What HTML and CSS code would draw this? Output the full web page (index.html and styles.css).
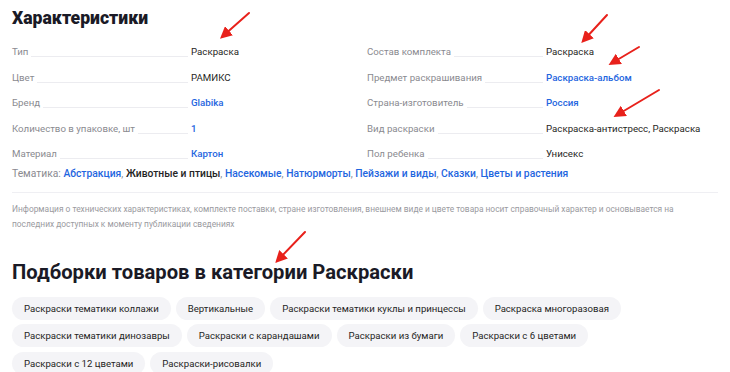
FILE: index.html
```html
<!DOCTYPE html>
<html lang="ru">
<head>
    <meta charset="UTF-8">
    <meta name="viewport" content="width=device-width, initial-scale=1.0">
    <title>Характеристики</title>
    <link rel="stylesheet" href="styles.css">
</head>
<body>
    <div class="page">
        <h2 class="title">Характеристики</h2>

        <!-- Таблица характеристик в две колонки -->
        <div class="params">
            <div class="params-col">
                <div class="param"><span class="param-name">Тип</span><span class="param-value">Раскраска</span></div>
                <div class="param"><span class="param-name">Цвет</span><span class="param-value">РАМИКС</span></div>
                <div class="param"><span class="param-name">Бренд</span><a class="param-value link" href="#">Glabika</a></div>
                <div class="param"><span class="param-name">Количество в упаковке, шт</span><a class="param-value link" href="#">1</a></div>
                <div class="param"><span class="param-name">Материал</span><a class="param-value link" href="#">Картон</a></div>
            </div>
            <div class="params-col">
                <div class="param"><span class="param-name">Состав комплекта</span><span class="param-value">Раскраска</span></div>
                <div class="param"><span class="param-name">Предмет раскрашивания</span><a class="param-value link" href="#">Раскраска-альбом</a></div>
                <div class="param"><span class="param-name">Страна-изготовитель</span><a class="param-value link" href="#">Россия</a></div>
                <div class="param"><span class="param-name">Вид раскраски</span><span class="param-value">Раскраска-антистресс, Раскраска</span></div>
                <div class="param"><span class="param-name">Пол ребенка</span><span class="param-value">Унисекс</span></div>
            </div>
        </div>

        <p class="theme">
            Тематика:
            <a class="link" href="#">Абстракция</a>, <span class="dark">Животные и птицы</span>,
            <a class="link" href="#">Насекомые</a>, <a class="link" href="#">Натюрморты</a>,
            <a class="link" href="#">Пейзажи и виды</a>, <a class="link" href="#">Сказки</a>,
            <a class="link" href="#">Цветы и растения</a>
        </p>

        <p class="note">
            Информация о технических характеристиках, комплекте поставки, стране изготовления, внешнем виде и цвете товара носит справочный характер и основывается на последних доступных к моменту публикации сведениях
        </p>

        <h2 class="title title-second">Подборки товаров в категории Раскраски</h2>

        <div class="chips">
            <a class="chip" href="#">Раскраски тематики коллажи</a>
            <a class="chip" href="#">Вертикальные</a>
            <a class="chip" href="#">Раскраски тематики куклы и принцессы</a>
            <a class="chip" href="#">Раскраска многоразовая</a>
            <a class="chip" href="#">Раскраски тематики динозавры</a>
            <a class="chip" href="#">Раскраски с карандашами</a>
            <a class="chip" href="#">Раскраски из бумаги</a>
            <a class="chip" href="#">Раскраски с 6 цветами</a>
            <a class="chip" href="#">Раскраски с 12 цветами</a>
            <a class="chip" href="#">Раскраски-рисовалки</a>
        </div>

        <!-- Красные стрелки-пометки поверх страницы -->
        <svg class="marks" width="730" height="372" viewBox="0 0 730 372">
            <defs>
                <marker id="head" markerWidth="6" markerHeight="6" refX="4" refY="3" orient="auto" markerUnits="strokeWidth">
                    <path d="M0,0 L6,3 L0,6 Z" fill="#e8211b"/>
                </marker>
            </defs>
            <g stroke="#e8211b" stroke-width="2" stroke-linecap="round" marker-end="url(#head)">
                <line x1="249" y1="13" x2="223" y2="36"/>
                <line x1="607" y1="15" x2="584" y2="40"/>
                <line x1="639" y1="47" x2="612" y2="63"/>
                <line x1="659" y1="90" x2="617" y2="115"/>
                <line x1="305" y1="232" x2="278" y2="260"/>
            </g>
        </svg>
    </div>
</body>
</html>
```

FILE: styles.css
```css
body {
    margin: 0;
    padding: 0;
    background: #ffffff;
    font-family: Roboto, Arial, sans-serif;
    color: #242424;
}
.page {
    position: relative;
    width: 730px;
    height: 372px;
    overflow: hidden;
    padding: 0 12px;
    box-sizing: border-box;
}
.title {
    margin: 0;
    padding-top: 6px;
    font-size: 17.6px;
    line-height: 24px;
    font-weight: 900;
    color: #1a1a26;
}
.title-second {
    padding-top: 28px;
    font-size: 20.2px;
    font-weight: 700;
}
.params {
    display: grid;
    grid-template-columns: 347px 351px;
    column-gap: 8px;
    margin-top: 16px;
}
.param {
    display: flex;
    align-items: baseline;
    height: 25.5px;
    font-size: 9.7px;
}
.param-name {
    width: 176px;
    flex-shrink: 0;
    display: flex;
    color: #8a8a90;
    font-size: 9.7px;
    margin-right: 3px;
}
.param-name::after {
    content: "";
    flex: 1;
    margin-left: 3px;
    border-bottom: 1px solid #ececf0;
}
.param-value {
    color: #1f1f24;
}
.link {
    color: #1f66e0;
    text-decoration: none;
    font-weight: 500;
}
.theme {
    margin: -7px 0 0;
    font-size: 10.3px;
    line-height: 14px;
    color: #8a8a90;
}
.theme .dark {
    color: #242424;
    font-weight: 500;
}
.note {
    margin: 11px 0 0;
    padding: 9px 40px 0 0;
    border-top: 1px solid #efeff3;
    width: 706px;
    box-sizing: border-box;
    font-size: 8.4px;
    line-height: 15px;
    color: #9a9aa0;
}
.chips {
    display: flex;
    flex-wrap: wrap;
    gap: 4.5px 5px;
    margin-top: 13px;
    width: 640px;
}
.chip {
    display: flex;
    align-items: center;
    height: 23px;
    padding: 0 12px;
    border-radius: 12px;
    background: #f4f4f7;
    color: #1f1f24;
    font-size: 9.6px;
    text-decoration: none;
}
.marks {
    position: absolute;
    top: 0;
    left: 0;
    pointer-events: none;
}
```
